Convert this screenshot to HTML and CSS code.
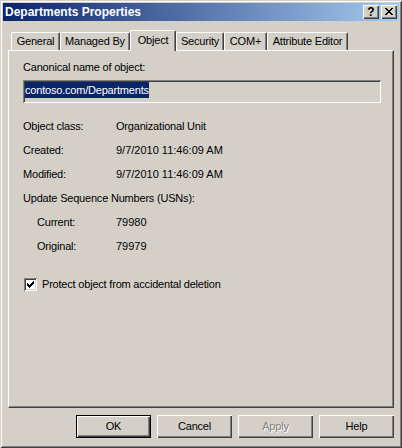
FILE: index.html
```html
<!DOCTYPE html>
<html>
<head>
<meta charset="utf-8">
<title>Departments Properties</title>
<link rel="stylesheet" href="styles.css">
</head>
<body>
<div class="window">
  <div class="titlebar">
    <span class="title">Departments Properties</span>
    <div class="caption-buttons">
      <div class="cap-btn cap-help">?</div>
      <div class="cap-btn cap-close">
        <svg width="8" height="7" viewBox="0 0 8 7" shape-rendering="crispEdges">
          <path d="M0 0h2v1h-2z M6 0h2v1h-2z M1 1h2v1h-2z M5 1h2v1h-2z M2 2h4v1h-4z M3 3h2v1h-2z M2 4h4v1h-4z M1 5h2v1h-2z M5 5h2v1h-2z M0 6h2v1h-2z M6 6h2v1h-2z" fill="#000"/>
        </svg>
      </div>
    </div>
  </div>

  <div class="tabs">
    <div class="tab tab-general">General</div>
    <div class="tab tab-managed">Managed By</div>
    <div class="tab tab-object active">Object</div>
    <div class="tab tab-security">Security</div>
    <div class="tab tab-com">COM+</div>
    <div class="tab tab-attr">Attribute Editor</div>
  </div>

  <div class="panel">
    <div class="label">Canonical name of object:</div>
    <div class="field"><span class="sel">contoso.com/Departments</span></div>

    <div class="props">
      <div class="prop"><span class="k">Object class:</span><span class="v">Organizational Unit</span></div>
      <div class="prop"><span class="k">Created:</span><span class="v num">9/7/2010 11:46:09 AM</span></div>
      <div class="prop"><span class="k">Modified:</span><span class="v num">9/7/2010 11:46:09 AM</span></div>
      <div class="prop"><span class="k-wide">Update Sequence Numbers (USNs):</span></div>
      <div class="prop indent"><span class="k">Current:</span><span class="v num">79980</span></div>
      <div class="prop indent"><span class="k">Original:</span><span class="v num">79979</span></div>
    </div>

    <div class="check-row">
      <span class="checkbox">
        <svg width="7" height="7" viewBox="0 0 7 7" shape-rendering="crispEdges">
          <path d="M6 0h1v3h-1z M5 1h1v3h-1z M4 2h1v3h-1z M3 3h1v3h-1z M2 4h1v3h-1z M1 3h1v3h-1z M0 2h1v3h-1z" fill="#000"/>
        </svg>
      </span>
      <span class="check-label">Protect object from accidental deletion</span>
    </div>
  </div>

  <div class="buttons">
    <div class="btn default">OK</div>
    <div class="btn">Cancel</div>
    <div class="btn disabled">Apply</div>
    <div class="btn">Help</div>
  </div>
</div>
</body>
</html>
```

FILE: styles.css
```css
html, body {
  margin: 0;
  padding: 0;
  background: #d4d0c8;
}

body {
  font-family: "Liberation Sans", Arial, sans-serif;
  font-size: 11px;
  letter-spacing: -0.2px;
  color: #000;
}

.window {
  width: 402px;
  height: 448px;
  box-sizing: border-box;
  padding: 3px 3px 10px 3px;
  background: #d4d0c8;
  box-shadow: inset 1px 1px #d4d0c8, inset -1px -1px #404040,
              inset 2px 2px #ffffff, inset -2px -2px #808080;
  display: flex;
  flex-direction: column;
}

/* Title bar */
.titlebar {
  height: 18px;
  flex-shrink: 0;
  display: flex;
  align-items: center;
  padding-left: 2px;
  background: linear-gradient(to right, #0a246a, #a6caf0);
  color: #fff;
}

.title {
  font-weight: bold;
  font-size: 12px;
  line-height: 14px;
  letter-spacing: 0;
}

.caption-buttons {
  margin-left: auto;
  margin-right: 2px;
  display: flex;
  gap: 2px;
}

.cap-btn {
  width: 16px;
  height: 14px;
  box-sizing: border-box;
  background: #d4d0c8;
  box-shadow: inset 1px 1px #ffffff, inset -1px -1px #404040,
              inset -2px -2px #808080;
  display: flex;
  align-items: center;
  justify-content: center;
  color: #000;
}

.cap-help {
  font-weight: bold;
  font-size: 12px;
  line-height: 12px;
  padding-bottom: 1px;
  letter-spacing: 0;
}

.cap-close svg {
  display: block;
  margin-left: -1px;
  margin-top: -1px;
}

/* Tabs */
.tabs {
  margin-top: 9px;
  height: 21px;
  margin-bottom: -1px;
  padding-left: 8px;
  display: flex;
  align-items: flex-start;
  position: relative;
  z-index: 1;
  flex-shrink: 0;
}

.tab {
  box-sizing: border-box;
  height: 18px;
  margin-top: 2px;
  border-top: 1px solid #fff;
  border-left: 1px solid #fff;
  border-right: 1px solid #404040;
  border-radius: 2px 2px 0 0;
  box-shadow: inset -1px 0 #808080;
  background: #d4d0c8;
  display: flex;
  align-items: center;
  justify-content: center;
  line-height: 13px;
  white-space: nowrap;
}

.tab.active {
  height: 21px;
  margin-top: 0;
  padding-bottom: 2px;
}

.tab-general { width: 49px; }
.tab-managed { width: 70px; }
.tab-object { width: 46px; }
.tab-security { width: 48px; }
.tab-com { width: 43px; }
.tab-attr { width: 81px; }

/* Panel */
.panel {
  flex: 1;
  margin: 0 5px;
  box-sizing: border-box;
  border-top: 1px solid #fff;
  border-left: 1px solid #fff;
  border-right: 1px solid #404040;
  border-bottom: 1px solid #404040;
  box-shadow: inset -1px -1px #808080;
  padding: 10px 0 0 14px;
}

.label {
  line-height: 13px;
}

.field {
  margin-top: 6px;
  width: 358px;
  height: 23px;
  box-sizing: border-box;
  padding: 2px 0 0 2px;
  box-shadow: inset 1px 1px #808080, inset -1px -1px #ffffff,
              inset 2px 2px #404040, inset -2px -2px #d4d0c8;
  display: flex;
  align-items: flex-start;
}

.sel {
  background: #0a246a;
  color: #fff;
  line-height: 16px;
}

.props {
  margin-top: 17px;
  display: flex;
  flex-direction: column;
  gap: 11px;
}

.prop {
  display: flex;
  line-height: 13px;
  white-space: nowrap;
}

.k {
  width: 93px;
  flex-shrink: 0;
}

.num {
  letter-spacing: 0;
}

.prop.indent {
  padding-left: 14px;
}

.prop.indent .k {
  width: 79px;
}

.check-row {
  margin-top: 25px;
  display: flex;
  align-items: center;
  line-height: 13px;
}

.checkbox {
  width: 13px;
  height: 13px;
  box-sizing: border-box;
  background: #fff;
  box-shadow: inset 1px 1px #808080, inset -1px -1px #ffffff,
              inset 2px 2px #404040, inset -2px -2px #d4d0c8;
  display: flex;
  align-items: center;
  justify-content: center;
  margin-left: 1px;
  margin-right: 5px;
}

.checkbox svg {
  display: block;
}

/* Buttons */
.buttons {
  margin-top: 7px;
  height: 23px;
  flex-shrink: 0;
  display: flex;
  justify-content: flex-end;
  gap: 6px;
  padding-right: 5px;
}

.btn {
  width: 75px;
  height: 23px;
  box-sizing: border-box;
  background: #d4d0c8;
  box-shadow: inset 1px 1px #ffffff, inset -1px -1px #404040,
              inset -2px -2px #808080;
  display: flex;
  align-items: center;
  justify-content: center;
  line-height: 13px;
}

.btn.default {
  box-shadow: inset 0 0 0 1px #000, inset 2px 2px #ffffff,
              inset -2px -2px #404040, inset -3px -3px #808080;
}

.btn.disabled {
  color: #808080;
  text-shadow: 1px 1px #ffffff;
}
```
